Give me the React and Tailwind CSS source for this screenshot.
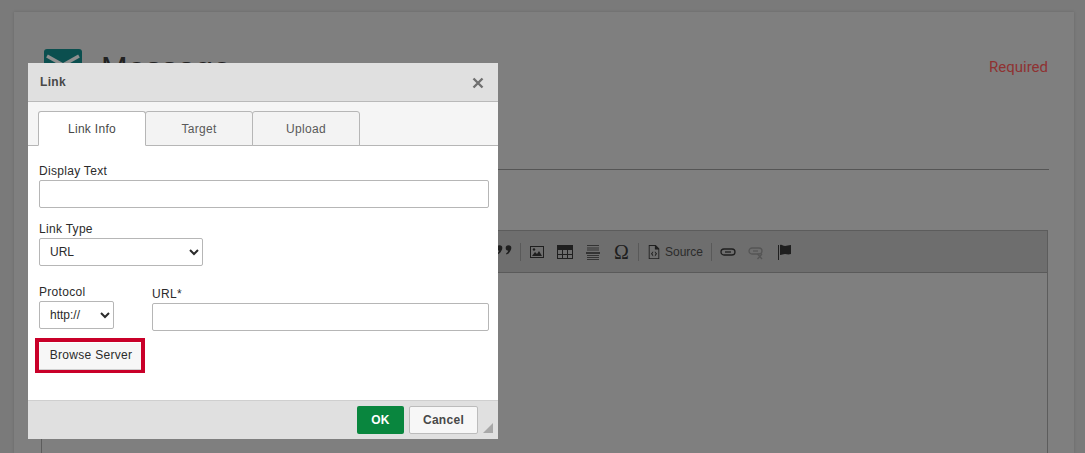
import React from 'react';

const sans = "font-['Liberation_Sans',Arial,sans-serif]";

function ToolIcon({ children, className = '' }) {
  return (
    <svg viewBox="0 0 16 16" className={`w-4 h-4 ${className}`} fill="#1f1f1f">
      {children}
    </svg>
  );
}

function Toolbar() {
  return (
    <div className="h-[42px] bg-[#6e6e6e] border-b border-[#5a5a5a] flex items-center justify-start pl-[454px]">
      <svg viewBox="0 0 17 10" className="w-[17px] h-[10px] -mt-[3px]" fill="#1f1f1f">
        <circle cx="3.500" cy="3" r="2.800" />
        <path d="M5.800 3.500C5.800 6.500 4 8.500 1.500 9.500L1 8.500C2.500 7.500 3.200 6.500 3.300 5z" />
        <circle cx="12.500" cy="3" r="2.800" />
        <path d="M14.800 3.500C14.800 6.500 13 8.500 10.500 9.500L10 8.500C11.500 7.500 12.200 6.500 12.300 5z" />
      </svg>
      <div className="w-px h-[18px] bg-[#595959] ml-[7px] mr-[8px]" />
      <ToolIcon>
        <path fillRule="evenodd" d="M1 2h14v12H1zM2 3v10h12V3z" />
        <path d="M3 12l3-4 2 2 2-3 3 5z" />
        <circle cx="5" cy="5.500" r="1.200" />
      </ToolIcon>
      <ToolIcon className="ml-[12px]">
        <path fillRule="evenodd" d="M0 1h16v14H0zM1 6v4h4V6zm5 0v4h4V6zm5 0v4h4V6zM1 11v3h4v-3zm5 0v3h4v-3zm5 0v3h4v-3z" />
      </ToolIcon>
      <ToolIcon className="ml-[12px]">
        <path d="M2 1h12v1H2zM2 3.500h12v1H2zM2 5.500h12v1H2zM1 8h14v2H1zM2 11h12v1H2zM2 13h12v1H2zM2 15h12v1H2z" fill="#333" />
      </ToolIcon>
      <span className="ml-[13px] w-4 text-[20px] leading-none font-['Liberation_Serif',serif] text-[#1f1f1f]">Ω</span>
      <div className="w-px h-[18px] bg-[#595959] ml-[8px] mr-[8px]" />
      <ToolIcon className="w-[14px]">
        <path fillRule="evenodd" d="M2 0h8l4 4v12H2zM3 1v14h10V5H9V1z" />
        <path d="M7 7L4.500 10 7 13V11.500L6 10l1-1.500zM9 7l2.500 3L9 13v-1.500l1-1.500-1-1.500z" />
      </ToolIcon>
      <span className={`${sans} ml-[4px] text-[12px] text-[#2b2b2b]`}>Source</span>
      <div className="w-px h-[18px] bg-[#595959] ml-[8px] mr-[8px]" />
      <svg viewBox="0 0 16 16" className="w-4 h-4" fill="none" stroke="#1f1f1f" strokeWidth="1.300">
        <rect x="1" y="5" width="14" height="6" rx="3" />
        <path d="M5 8h6" />
      </svg>
      <svg viewBox="0 0 16 16" className="w-4 h-4 ml-[12px]" fill="none" stroke="#555" strokeWidth="1.300">
        <rect x="1" y="4" width="13" height="6" rx="3" />
        <path d="M5 7h5" />
        <path d="M9.500 10l4.500 5M14 10l-4.500 5" />
      </svg>
      <svg viewBox="0 0 16 16" className="w-4 h-4 ml-[13px]" fill="#1f1f1f">
        <path d="M1 1h1v15H1zM3 1c2-1 3 1 5 1s3-1 6-1v9c-3 1-4 0-6 0s-3 1-5 1z" />
      </svg>
    </div>
  );
}

function Tab({ label, active }) {
  return (
    <div
      className={`w-[108px] -mr-px h-[35px] flex items-center justify-center rounded-t-[3px] border border-[#b6b6b6] text-[12px] tracking-[0.3px] ${
        active ? 'bg-white border-b-white text-[#484848] relative z-10' : 'bg-[#f3f3f3] text-[#595959]'
      }`}
    >
      {label}
    </div>
  );
}

function Label({ children, className = '' }) {
  return <label className={`block text-[12px] leading-[14px] tracking-[0.3px] text-[#2b2b2b] ${className}`}>{children}</label>;
}

function TextField({ className = '' }) {
  return <input type="text" className={`block h-[28px] bg-white border border-[#b6b6b6] rounded-[2px] ${className}`} />;
}

function Select({ value, className = '' }) {
  return (
    <select
      defaultValue={value}
      className={`block h-[28px] bg-white border border-[#b6b6b6] rounded-[2px] pl-[6px] text-[12px] text-[#2b2b2b] ${className}`}
    >
      <option>{value}</option>
    </select>
  );
}

function LinkDialog() {
  return (
    <div className={`${sans} absolute left-[28px] top-[63px] w-[470px] h-[376px] flex flex-col bg-white`}>
      <div className="h-[39px] shrink-0 bg-[#e0e0e0] border-b border-[#b9b9b9] flex items-center justify-between pl-[12px] pr-[14px]">
        <span className="text-[12px] font-bold tracking-[0.3px] text-[#484848]">Link</span>
        <svg viewBox="0 0 12 12" className="w-[12px] h-[12px] mt-[2px]" stroke="#707070" strokeWidth="2.400">
          <path d="M1.500 1.500l9 9M10.500 1.500l-9 9" />
        </svg>
      </div>
      <div className="h-[44px] shrink-0 bg-[#f5f5f5] border-b border-[#b6b6b6] flex items-end pl-[10px] pt-[9px]">
        <div className="flex -mb-px">
          <Tab label="Link Info" active />
          <Tab label="Target" />
          <Tab label="Upload" />
        </div>
      </div>
      <div className="flex-1 px-[11px] pt-[18px]">
        <Label>Display Text</Label>
        <TextField className="w-[450px] mt-[2px]" />
        <Label className="mt-[14px]">Link Type</Label>
        <Select value="URL" className="w-[164px] mt-[2px]" />
        <div className="flex mt-[19px]">
          <div className="w-[113px] shrink-0">
            <Label>Protocol</Label>
            <Select value="http://" className="w-[75px] mt-[2px]" />
          </div>
          <div className="mt-[2px]">
            <Label>URL*</Label>
            <TextField className="w-[337px] mt-[2px]" />
          </div>
        </div>
        <div className="-ml-[4px] mt-[7px] w-[110px] h-[35px] border-[4px] border-[#c90029]">
          <button className="w-full h-full bg-[#f7f7f7] text-[12px] leading-[24px] pl-[2px] pb-[2px] tracking-[0.3px] text-[#2b2b2b] border-b border-[#d0d0d0]">
            Browse Server
          </button>
        </div>
      </div>
      <div className="relative h-[39px] shrink-0 bg-[#e0e0e0] border-t border-[#cfcfcf] flex items-start justify-end gap-[5px] pt-[5px] pr-[20px]">
        <button className="w-[47px] h-[28px] rounded-[2px] bg-[#09863e] text-white text-[12px] font-bold tracking-[0.3px]">OK</button>
        <button className="w-[69px] h-[28px] rounded-[2px] bg-[#f7f7f7] border border-[#bcbcbc] text-[#484848] text-[12px] font-bold tracking-[0.3px]">Cancel</button>
        <svg viewBox="0 0 10 10" className="absolute right-[5px] bottom-[6px] w-[10px] h-[10px]" fill="#a8a8a8">
          <path d="M10 0v10H0z" />
        </svg>
      </div>
    </div>
  );
}

export default function App() {
  return (
    <div className="relative w-[1085px] h-[453px] overflow-hidden bg-[#7a7a7a]">
      <div className={`${sans} ml-[14px] mr-[11px] pt-[12px] h-full`}>
        <div className="h-full bg-[#7f7f7f] shadow-[0_0_3px_rgba(0,0,0,0.15)] pl-[27px] pr-[25px]">
          <div className="h-[158px] border-b border-[#555] relative">
            <div className="flex items-start justify-between pt-[37px]">
              <div className="flex items-center gap-[19px] pl-[3px]">
                <div className="w-[38px] h-[38px] rounded-[3px] bg-[#0b4f4f] flex items-start justify-center pt-[5px]">
                  <svg viewBox="0 0 38 20" className="w-[38px] h-[20px]" fill="none" stroke="#8f8f8f" strokeWidth="3.500">
                    <path d="M3 2l16 9 16-9" />
                  </svg>
                </div>
                <span className="text-[32px] leading-none text-[#222]">Message</span>
              </div>
              <span className="text-[15px] leading-[18px] text-[#8f3232] font-['Roboto',sans-serif] mt-[9px] mr-[1px]">Required</span>
            </div>
          </div>
          <div className="mt-[60px] h-[300px] border border-[#5c5c5c] mr-[1px]">
            <Toolbar />
          </div>
        </div>
      </div>
      <LinkDialog />
    </div>
  );
}
